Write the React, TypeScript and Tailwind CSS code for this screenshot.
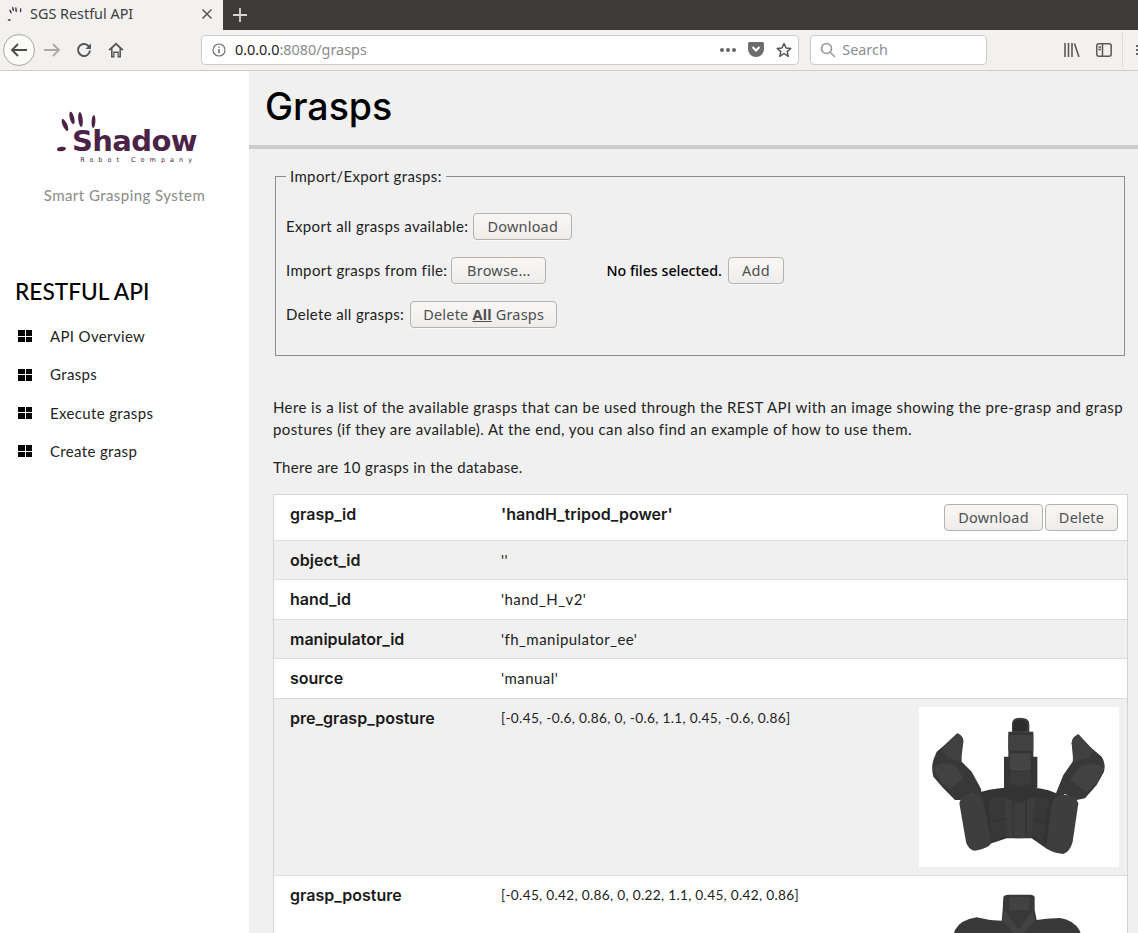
const body = "font-['Lato','Open_Sans',sans-serif]";
const ui = "font-['Noto_Sans','Open_Sans',sans-serif]";
const head = "font-['Inter','Lato',sans-serif]";

const Btn = ({ w, children }: { w: string; children: React.ReactNode }) => (
  <button
    className={`${w} ${ui} h-[27px] shrink-0 rounded-[4px] border border-[#b4b2af] bg-gradient-to-b from-[#f8f7f6] to-[#eeedeb] text-[14.5px] leading-none tracking-[0.2px] text-[#4f4f4f] shadow-[0_1px_0_rgba(255,255,255,0.5)]`}
  >
    {children}
  </button>
);

const GridIcon = () => (
  <span className="grid h-[12px] w-[14px] grid-cols-2 gap-[1px]">
    <i className="bg-black" />
    <i className="bg-black" />
    <i className="bg-black" />
    <i className="bg-black" />
  </span>
);

const HandMarks = ({ className }: { className: string }) => (
  <svg viewBox="0 0 48 44" className={className} fill="#4b2346">
    <ellipse cx="10" cy="15" rx="2.2" ry="6.5" transform="rotate(-24 10 15)" />
    <ellipse cx="17" cy="8" rx="2.2" ry="6.5" transform="rotate(-14 17 8)" />
    <ellipse cx="25.5" cy="9.5" rx="2.2" ry="7.5" transform="rotate(-6 25.5 9.5)" />
    <ellipse cx="38.5" cy="11.5" rx="1.9" ry="6.5" transform="rotate(3 38.5 11.5)" />
    <ellipse cx="6.5" cy="39" rx="4.5" ry="2.2" transform="rotate(-8 6.5 39)" />
  </svg>
);

const Tab = () => (
  <div className="flex h-[30px] w-[223px] items-center bg-[#f2f1f0] pb-[2px] pl-[7px] pr-[10px]">
    <HandMarks className="h-[16px] w-[17px]" />
    <span className={`${ui} ml-[6px] flex-1 text-[14.4px] text-[#3d3d3d]`}>SGS Restful API</span>
    <svg viewBox="0 0 12 12" className="h-[12px] w-[12px]" stroke="#555" strokeWidth="1.5">
      <path d="M1.5 1.5l9 9M10.5 1.5l-9 9" />
    </svg>
  </div>
);

const Toolbar = () => (
  <div className="flex h-[41px] items-center border-b border-[#cfccc8] bg-[#f2f1f0] pb-[1px]">
    <div className="ml-[3px] flex h-[32px] w-[32px] items-center justify-center rounded-full border border-[#a8a6a3] bg-[#fbfbfa]">
      <svg viewBox="0 0 18 16" className="h-[16px] w-[18px]" fill="none" stroke="#4a4a4a" strokeWidth="1.8">
        <path d="M17 8H2M8 2L2 8l6 6" />
      </svg>
    </div>
    <svg viewBox="0 0 18 16" className="ml-[8px] h-[16px] w-[18px]" fill="none" stroke="#aaa9a7" strokeWidth="1.8">
      <path d="M1 8h15M10 2l6 6-6 6" />
    </svg>
    <svg viewBox="0 0 16 16" className="ml-[15px] h-[16px] w-[16px]" fill="none" stroke="#555" strokeWidth="2">
      <path d="M14 8.5A6 6 0 1 1 12 3.5L14.5 6" />
      <path d="M15 1.5V7H9.5" fill="#555" stroke="none" />
    </svg>
    <svg viewBox="0 0 16 16" className="ml-[16px] h-[16px] w-[16px]" fill="#555">
      <path d="M8 0.5L0.5 7.5l1.2 1.2L3 7.5V15.5h3.5V11h3v4.5H13V7.5l1.3 1.2 1.2-1.2zM4.6 14V6.2L8 3l3.4 3.2V14h-.6V9.5H5.2V14z" />
    </svg>
    <div className="ml-[77px] flex h-[30px] w-[599px] items-center rounded-[4px] border border-[#cdcbc8] bg-white pl-[10px] pr-[6px]">
      <svg viewBox="0 0 14 14" className="h-[14px] w-[14px]" fill="none" stroke="#6a6a6a" strokeWidth="1.1">
        <circle cx="7" cy="7" r="6" />
        <path d="M7 6v4.2M7 3.4v1.4" strokeWidth="1.5" />
      </svg>
      <span className={`${ui} ml-[9px] flex-1 pt-[1px] text-[14.4px]`}>
        <span className="text-[#222]">0.0.0.0</span>
        <span className="text-[#8a8a8a]">:8080/grasps</span>
      </span>
      <span className="flex gap-[2px]">
        <i className="h-[4px] w-[4px] rounded-full bg-[#666]" />
        <i className="h-[4px] w-[4px] rounded-full bg-[#666]" />
        <i className="h-[4px] w-[4px] rounded-full bg-[#666]" />
      </span>
      <svg viewBox="0 0 16 15" className="ml-[12px] h-[15px] w-[16px]">
        <path d="M1.5 0h13A1.5 1.5 0 0 1 16 1.5V7A8 8 0 0 1 0 7V1.5A1.5 1.5 0 0 1 1.5 0z" fill="#6c6c6c" />
        <path d="M4.5 5L8 8.5 11.5 5" fill="none" stroke="#fff" strokeWidth="2" />
      </svg>
      <svg viewBox="0 0 16 16" className="ml-[12px] h-[16px] w-[16px]" fill="none" stroke="#555" strokeWidth="1.5">
        <path d="M8 1.5l2 4.4 4.8.5-3.6 3.2 1 4.7L8 11.5l-4.2 2.8 1-4.7L1.2 6.4l4.8-.5z" strokeLinejoin="round" />
      </svg>
    </div>
    <div className="ml-[11px] flex h-[30px] w-[177px] items-center rounded-[4px] border border-[#cdcbc8] bg-white pl-[9px]">
      <svg viewBox="0 0 16 16" className="h-[16px] w-[16px]" fill="none" stroke="#999" strokeWidth="1.6">
        <circle cx="6.5" cy="6.5" r="5" />
        <path d="M10.2 10.2L15 15" />
      </svg>
      <span className={`${ui} ml-[6px] pt-[1px] text-[14.4px] text-[#8a8f96]`}>Search</span>
    </div>
    <svg viewBox="0 0 16 14" className="ml-[77px] h-[14px] w-[16px]" stroke="#5a5a5a" strokeWidth="1.6" fill="none">
      <path d="M1 0v14M4.5 0v14M8 0v14M10.5 0.5L15 14" />
    </svg>
    <svg viewBox="0 0 16 14" className="ml-[16px] h-[14px] w-[16px]" fill="none" stroke="#5a5a5a" strokeWidth="1.5">
      <rect x="0.8" y="0.8" width="14.4" height="12.4" rx="2" />
      <path d="M6.5 1v12M2.5 4H5M2.5 6.5H5" />
    </svg>
    <span className="ml-[10px] h-[34px] w-px bg-[#dcdad7]" />
    <span className="ml-[13px] flex flex-col gap-[2px]">
      <i className="h-[2px] w-[2px] bg-[#666]" />
      <i className="h-[2px] w-[2px] bg-[#666]" />
      <i className="h-[2px] w-[2px] bg-[#666]" />
    </span>
  </div>
);

const Logo = () => (
  <div className="relative ml-[55px] mt-[39px] h-[54px] w-[142px]">
    <HandMarks className="absolute left-0 top-0 h-[44px] w-[48px]" />
    <div className="flex h-full flex-col items-end pt-[18px]">
      <span className="font-['DejaVu_Sans',sans-serif] text-[29px] font-bold leading-[26px] tracking-[-0.6px] text-[#4b2346]">
        Shadow
      </span>
      <span className="mt-[2px] whitespace-nowrap font-['DejaVu_Sans',sans-serif] text-[6.5px] leading-[8px] tracking-[5px] text-[#4b2346]">
        Robot Company
      </span>
    </div>
  </div>
);

const menu = ["API Overview", "Grasps", "Execute grasps", "Create grasp"];

const Sidebar = () => (
  <aside className={`${body} h-full w-[249px] shrink-0 bg-white`}>
    <Logo />
    <p className="mt-[21px] text-center text-[15px] leading-[20px] tracking-[0.45px] text-[#8a8a8a]">
      Smart Grasping System
    </p>
    <h2 className="ml-[15px] mt-[72px] text-[22.7px] font-medium leading-[30px] text-black">RESTFUL API</h2>
    <ul className="mt-[10px]">
      {menu.map((m) => (
        <li key={m} className="flex h-[38.4px] items-center pl-[18px] text-[15px] tracking-[0.35px] text-[#222]">
          <GridIcon />
          <span className="ml-[18px]">{m}</span>
        </li>
      ))}
    </ul>
  </aside>
);

// coordinates are the 3x crop of the reference, hence the odd viewBox
const PreGrasp = () => (
  <svg viewBox="57 21 600 480" className="h-[160px] w-[200px] shrink-0 bg-white" strokeLinejoin="round">
    <path d="M190 300L245 275Q290 262 360 262Q430 262 465 278L525 300 515 430 490 460 438 445 395 415H320L275 430 225 450 200 430z" fill="#333" />
    <path d="M325 95H400V170H412V265H312V170H325z" fill="#353535" />
    <path d="M330 215H392V250Q360 265 330 250z" fill="#3b3b3b" />
    <path d="M330 160H392V205Q392 212 385 212H338Q330 212 330 205z" fill="#444" />
    <path d="M325 105H400V152H325z" fill="#424242" />
    <path d="M336 100V72Q336 53 360 53Q388 53 388 72V100z" fill="#3c3c3c" />
    <path d="M340 72Q340 60 360 60Q382 60 382 72V92H340z" fill="#2c2c2c" />
    <path
      d="M172 100Q190 108 190 125L183 160 185 185 215 215 242 265 252 310 215 280 185 300 165 300 130 265 100 230Q92 200 102 175L110 155 140 130z"
      fill="#383838"
    />
    <path d="M172 100Q190 108 190 125L183 185 145 175 125 150 140 130z" fill="#404040" />
    <path d="M100 205Q125 180 165 195L190 235 150 268 125 250z" fill="#424242" />
    <path
      d="M535 103Q515 112 515 130L520 160 518 185 490 225 468 280 458 310 495 282 530 300 555 295 590 255 612 215Q618 190 605 170L570 140z"
      fill="#383838"
    />
    <path d="M535 103Q515 112 515 130L520 185 565 175 580 155 570 140z" fill="#404040" />
    <path d="M612 205Q590 185 545 195L510 240 560 275 590 250z" fill="#424242" />
    <path d="M265 300Q290 285 315 292L322 405 275 425z" fill="#383838" />
    <path d="M395 292Q420 285 447 300L430 425 395 405z" fill="#383838" />
    <path d="M312 290L358 310 405 290 395 410Q358 420 320 410z" fill="#3d3d3d" />
    <path d="M178 310Q185 280 215 280Q245 282 250 310L275 425Q270 445 225 452Q205 450 198 425z" fill="#3e3e3e" />
    <path d="M535 310Q525 282 490 285Q460 290 455 315L438 445Q460 460 490 462Q510 455 518 425z" fill="#3e3e3e" />
    <path d="M340 305V410M378 305V410M278 365L318 355M400 355L436 370" stroke="#2e2e2e" strokeWidth="2.5" fill="none" />
  </svg>
);

const GraspHand = () => (
  <svg viewBox="57 552 600 480" className="h-[160px] w-[200px] shrink-0 bg-white">
    <path
      d="M310 592Q312 584 325 584H390Q403 584 404 592V630L410 660 440 656 480 654Q520 660 538 690 560 740 540 800L500 900 460 950H250L210 900 170 800Q150 730 165 690 180 660 230 652L270 660 305 662 308 630z"
      fill="#383838"
    />
    <path d="M328 590H388V630H328zM315 632L355 690 398 632 405 660 355 720 308 660z" fill="#424242" />
  </svg>
);

type Row = { k: string; v: string; h: string; white: boolean; valueClass: string; extra?: React.ReactNode };

const plain = "text-[15px] tracking-[0.45px] text-[#222]";
const numbers = "text-[13.7px] tracking-[0.3px] text-[#222]";

const rows: Row[] = [
  {
    k: "grasp_id",
    v: "'handH_tripod_power'",
    h: "h-[46px]",
    white: true,
    valueClass: `${head} text-[16px] font-semibold text-[#1a1a1a]`,
    extra: (
      <div className="ml-auto flex gap-[2px] pr-[9px] pt-[9px]">
        <Btn w="w-[99px]">Download</Btn>
        <Btn w="w-[73px]">Delete</Btn>
      </div>
    ),
  },
  { k: "object_id", v: "''", h: "h-[39px]", white: false, valueClass: plain },
  { k: "hand_id", v: "'hand_H_v2'", h: "h-[40px]", white: true, valueClass: plain },
  { k: "manipulator_id", v: "'fh_manipulator_ee'", h: "h-[39px]", white: false, valueClass: plain },
  { k: "source", v: "'manual'", h: "h-[40px]", white: true, valueClass: plain },
  {
    k: "pre_grasp_posture",
    v: "[-0.45, -0.6, 0.86, 0, -0.6, 1.1, 0.45, -0.6, 0.86]",
    h: "h-[177px]",
    white: false,
    valueClass: numbers,
    extra: (
      <div className="ml-auto pr-[8px] pt-[8px]">
        <PreGrasp />
      </div>
    ),
  },
  {
    k: "grasp_posture",
    v: "[-0.45, 0.42, 0.86, 0, 0.22, 1.1, 0.45, 0.42, 0.86]",
    h: "h-[177px]",
    white: true,
    valueClass: numbers,
    extra: (
      <div className="ml-auto pr-[8px] pt-[8px]">
        <GraspHand />
      </div>
    ),
  },
];

const GraspTable = () => (
  <div className="mt-[16px] w-[855px] border border-[#d4d4d4]">
    {rows.map((r) => (
      <div key={r.k} className={`flex border-b border-[#dcdcdc] ${r.h} ${r.white ? "bg-white" : "bg-[#f0f0f0]"}`}>
        <div className={`${head} w-[227px] shrink-0 pl-[16px] pt-[9px] text-[16px] font-semibold leading-[20px] text-[#1a1a1a]`}>
          {r.k}
        </div>
        <div className={`pt-[9px] leading-[20px] ${r.valueClass}`}>{r.v}</div>
        {r.extra}
      </div>
    ))}
  </div>
);

const ImportExport = () => (
  <fieldset className="ml-[2px] h-[190px] w-[850px] border border-[#8c8c8c] px-[10px]">
    <legend className="px-[4px] text-[15px] leading-[20px] tracking-[0.35px] text-[#222]">Import/Export grasps:</legend>
    <div className="mt-[27px] flex flex-col gap-[17px] text-[15px] tracking-[0.35px] text-[#222]">
      <div className="flex h-[27px] items-center gap-[5px]">
        <span>Export all grasps available:</span>
        <Btn w="w-[99px]">Download</Btn>
      </div>
      <div className="flex h-[27px] items-center gap-[4px]">
        <span>Import grasps from file:</span>
        <Btn w="w-[95px]">Browse...</Btn>
        <span className={`${ui} ml-[56px] text-[14.25px] font-medium tracking-normal text-black`}>No files selected.</span>
        <Btn w="ml-[2px] w-[56px]">Add</Btn>
      </div>
      <div className="flex h-[27px] items-center gap-[6px]">
        <span>Delete all grasps:</span>
        <Btn w="w-[147px]">
          Delete <b className="underline">All</b> Grasps
        </Btn>
      </div>
    </div>
  </fieldset>
);

const Main = () => (
  <main className={`${body} h-full flex-1 overflow-hidden bg-[#f0f0f0]`}>
    <div className="flex h-[78px] items-center border-b-[4px] border-[#cccccc] pb-[1px] pl-[16px]">
      <h1 className={`${head} text-[37.5px] font-medium text-black`}>Grasps</h1>
    </div>
    <div className="pl-[24px] pt-[17px]">
      <ImportExport />
      <p className="mt-[40px] w-[855px] text-[15px] leading-[22px] tracking-[0.4px] text-[#222]">
        Here is a list of the available grasps that can be used through the REST API with an image showing the
        pre-grasp and grasp postures (if they are available). At the end, you can also find an example of how to use
        them.
      </p>
      <p className="mt-[16px] text-[15px] leading-[22px] tracking-[0.35px] text-[#222]">
        There are 10 grasps in the database.
      </p>
      <GraspTable />
    </div>
  </main>
);

export default function App() {
  return (
    <div className="flex h-[933px] w-[1138px] flex-col overflow-hidden bg-white">
      <div className="flex h-[30px] items-center bg-[#3c3b37]">
        <Tab />
        <svg viewBox="0 0 14 14" className="ml-[10px] h-[14px] w-[14px]" stroke="#d8d6d3" strokeWidth="1.8">
          <path d="M7 0v14M0 7h14" />
        </svg>
      </div>
      <Toolbar />
      <div className="flex min-h-0 flex-1">
        <Sidebar />
        <Main />
      </div>
    </div>
  );
}
